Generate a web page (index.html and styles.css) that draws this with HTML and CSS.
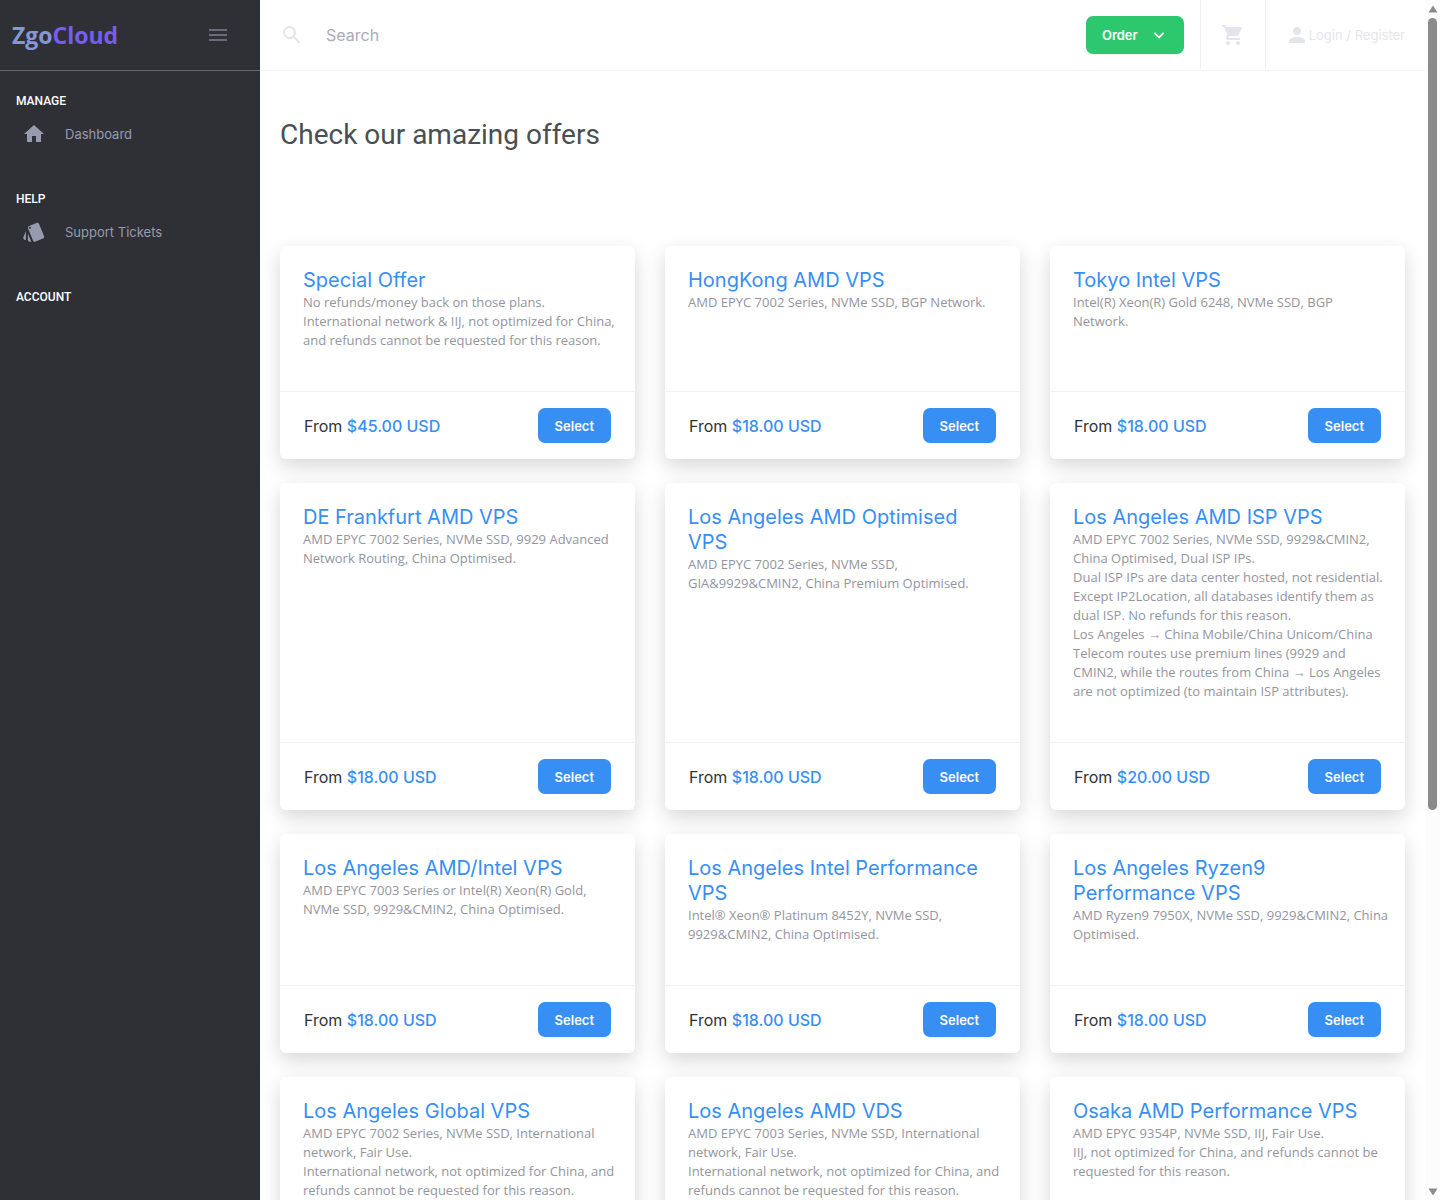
FILE: index.html
```html
<!DOCTYPE html>
<html lang="en">
<head>
  <meta charset="UTF-8" />
  <meta name="viewport" content="width=device-width, initial-scale=1.0" />
  <title>ZgoCloud</title>
  <link rel="stylesheet" href="styles.css">
</head>

<body>
  <!-- Sidebar -->
  <aside class="sidebar">
    <div class="sidebar-header">
      <a class="logo" href="#"><span class="logo-zgo">Zgo</span><span class="logo-cloud">Cloud</span></a>
      <button class="menu-toggle" aria-label="Toggle menu">
        <svg class="icon" viewBox="0 0 24 24"><path d="M3 18h18v-2H3v2zm0-5h18v-2H3v2zm0-7v2h18V6H3z"/></svg>
      </button>
    </div>
    <nav class="sidebar-nav">
      <div class="nav-group">
        <div class="nav-label">MANAGE</div>
        <a class="nav-link" href="#">
          <svg class="icon" viewBox="0 0 24 24"><path d="M10 20v-6h4v6h5v-8h3L12 3 2 12h3v8z"/></svg>
          Dashboard
        </a>
      </div>
      <div class="nav-group">
        <div class="nav-label">HELP</div>
        <a class="nav-link" href="#">
          <svg class="icon" viewBox="0 0 24 24"><path d="M2.53 19.65l1.34.56v-9.03l-2.43 5.86c-.41 1.02.08 2.19 1.09 2.61zm19.5-3.7L17.07 3.98c-.31-.75-1.04-1.21-1.81-1.23-.26 0-.53.04-.79.15L7.1 5.95c-.75.31-1.21 1.03-1.23 1.8-.01.27.04.54.15.8l4.96 11.97c.31.76 1.05 1.22 1.83 1.23.26 0 .52-.05.77-.15l7.36-3.05c1.02-.42 1.51-1.59 1.09-2.6zM7.88 8.75c-.55 0-1-.45-1-1s.45-1 1-1 1 .45 1 1-.45 1-1 1zm-2 11c0 1.1.9 2 2 2h1.45l-3.45-8.34v6.34z"/></svg>
          Support Tickets
        </a>
      </div>
      <div class="nav-group">
        <div class="nav-label">ACCOUNT</div>
      </div>
    </nav>
  </aside>

  <main class="main">
    <!-- Top bar -->
    <header class="top-bar">
      <label class="search">
        <svg class="icon" viewBox="0 0 24 24"><path d="M15.5 14h-.79l-.28-.27A6.471 6.471 0 0 0 16 9.5 6.5 6.5 0 1 0 9.5 16c1.61 0 3.09-.59 4.23-1.57l.27.28v.79l5 4.99L20.49 19l-4.99-5zm-6 0C7.01 14 5 11.99 5 9.5S7.01 5 9.5 5 14 7.01 14 9.5 11.99 14 9.5 14z"/></svg>
        <input class="search-input" type="text" placeholder="Search" aria-label="Search">
      </label>
      <button class="btn btn-order">
        Order
        <svg class="chevron" viewBox="0 0 24 24"><path d="M6.7 8.3L12 13.6l5.3-5.3L19 10l-7 7-7-7z"/></svg>
      </button>
      <a class="cart" href="#" aria-label="Cart">
        <svg class="icon" viewBox="0 0 24 24"><path d="M7 18c-1.1 0-1.99.9-1.99 2S5.9 22 7 22s2-.9 2-2-.9-2-2-2zM1 2v2h2l3.6 7.59-1.35 2.45c-.16.28-.25.61-.25.96 0 1.1.9 2 2 2h12v-2H7.42c-.14 0-.25-.11-.25-.25l.03-.12.9-1.63h7.45c.75 0 1.41-.41 1.75-1.03l3.58-6.49A1 1 0 0 0 20 4H5.21l-.94-2H1zm16 16c-1.1 0-1.99.9-1.99 2s.89 2 1.99 2 2-.9 2-2-.9-2-2-2z"/></svg>
      </a>
      <a class="login" href="#">
        <svg class="icon" viewBox="0 0 24 24"><path d="M12 12c2.21 0 4-1.79 4-4s-1.79-4-4-4-4 1.79-4 4 1.79 4 4 4zm0 2c-2.67 0-8 1.34-8 4v2h16v-2c0-2.66-5.33-4-8-4z"/></svg>
        Login / Register
      </a>
    </header>

    <div class="content">
      <h1>Check our amazing offers</h1>

      <div class="offers">
        <section class="card">
          <div class="card-body">
            <h2>Special Offer</h2>
            <p>No refunds/money back on those plans.<br>International network &amp; IIJ, not optimized for China, and refunds cannot be requested for this reason.</p>
          </div>
          <div class="card-footer">
            <div>From <span class="price">$45.00 USD</span></div>
            <button class="btn">Select</button>
          </div>
        </section>

        <section class="card">
          <div class="card-body">
            <h2>HongKong AMD VPS</h2>
            <p>AMD EPYC 7002 Series, NVMe SSD, BGP Network.</p>
          </div>
          <div class="card-footer">
            <div>From <span class="price">$18.00 USD</span></div>
            <button class="btn">Select</button>
          </div>
        </section>

        <section class="card">
          <div class="card-body">
            <h2>Tokyo Intel VPS</h2>
            <p>Intel(R) Xeon(R) Gold 6248, NVMe SSD, BGP Network.</p>
          </div>
          <div class="card-footer">
            <div>From <span class="price">$18.00 USD</span></div>
            <button class="btn">Select</button>
          </div>
        </section>

        <section class="card">
          <div class="card-body">
            <h2>DE Frankfurt AMD VPS</h2>
            <p>AMD EPYC 7002 Series, NVMe SSD, 9929 Advanced Network Routing, China Optimised.</p>
          </div>
          <div class="card-footer">
            <div>From <span class="price">$18.00 USD</span></div>
            <button class="btn">Select</button>
          </div>
        </section>

        <section class="card">
          <div class="card-body">
            <h2>Los Angeles AMD Optimised VPS</h2>
            <p>AMD EPYC 7002 Series, NVMe SSD, GIA&amp;9929&amp;CMIN2, China Premium Optimised.</p>
          </div>
          <div class="card-footer">
            <div>From <span class="price">$18.00 USD</span></div>
            <button class="btn">Select</button>
          </div>
        </section>

        <section class="card">
          <div class="card-body">
            <h2>Los Angeles AMD ISP VPS</h2>
            <p>AMD EPYC 7002 Series, NVMe SSD, 9929&amp;CMIN2, China Optimised, Dual ISP IPs.<br>Dual ISP IPs are data center hosted, not residential. Except IP2Location, all databases identify them as dual ISP. No refunds for this reason.<br>Los Angeles → China Mobile/China Unicom/China Telecom routes use premium lines (9929 and CMIN2, while the routes from China → Los Angeles are not optimized (to maintain ISP attributes).</p>
          </div>
          <div class="card-footer">
            <div>From <span class="price">$20.00 USD</span></div>
            <button class="btn">Select</button>
          </div>
        </section>

        <section class="card">
          <div class="card-body">
            <h2>Los Angeles AMD/Intel VPS</h2>
            <p>AMD EPYC 7003 Series or Intel(R) Xeon(R) Gold, NVMe SSD, 9929&amp;CMIN2, China Optimised.</p>
          </div>
          <div class="card-footer">
            <div>From <span class="price">$18.00 USD</span></div>
            <button class="btn">Select</button>
          </div>
        </section>

        <section class="card">
          <div class="card-body">
            <h2>Los Angeles Intel Performance VPS</h2>
            <p>Intel® Xeon® Platinum 8452Y, NVMe SSD, 9929&amp;CMIN2, China Optimised.</p>
          </div>
          <div class="card-footer">
            <div>From <span class="price">$18.00 USD</span></div>
            <button class="btn">Select</button>
          </div>
        </section>

        <section class="card">
          <div class="card-body">
            <h2>Los Angeles Ryzen9 Performance VPS</h2>
            <p>AMD Ryzen9 7950X, NVMe SSD, 9929&amp;CMIN2, China Optimised.</p>
          </div>
          <div class="card-footer">
            <div>From <span class="price">$18.00 USD</span></div>
            <button class="btn">Select</button>
          </div>
        </section>

        <section class="card">
          <div class="card-body">
            <h2>Los Angeles Global VPS</h2>
            <p>AMD EPYC 7002 Series, NVMe SSD, International network, Fair Use.<br>International network, not optimized for China, and refunds cannot be requested for this reason.</p>
          </div>
        </section>

        <section class="card">
          <div class="card-body">
            <h2>Los Angeles AMD VDS</h2>
            <p>AMD EPYC 7003 Series, NVMe SSD, International network, Fair Use.<br>International network, not optimized for China, and refunds cannot be requested for this reason.</p>
          </div>
        </section>

        <section class="card">
          <div class="card-body">
            <h2>Osaka AMD Performance VPS</h2>
            <p>AMD EPYC 9354P, NVMe SSD, IIJ, Fair Use.<br>IIJ, not optimized for China, and refunds cannot be requested for this reason.</p>
          </div>
        </section>
      </div>
    </div>
  </main>

  <!-- Scroll rail -->
  <div class="rail" aria-hidden="true">
    <svg class="rail-arrow" viewBox="0 0 10 8"><path d="M5 0.5L9.5 7.5H0.5z"/></svg>
    <div class="rail-track"><div class="rail-thumb"></div></div>
    <svg class="rail-arrow" viewBox="0 0 10 8"><path d="M5 7.5L0.5 0.5H9.5z"/></svg>
  </div>
</body>
</html>
```
FILE: styles.css
```css
* {
  box-sizing: border-box;
}

body {
  margin: 0;
  display: flex;
  height: 100vh;
  overflow: hidden;
  background-color: #fff;
  font-family: Inter, Roboto, sans-serif;
  font-size: 13px;
  color: #303236;
}

a {
  text-decoration: none;
}

.icon {
  width: 24px;
  height: 24px;
  flex: none;
  fill: currentColor;
}

/* Sidebar */
.sidebar {
  width: 260px;
  flex: none;
  background-color: #2f3036;
}

.sidebar-header {
  display: flex;
  align-items: center;
  justify-content: space-between;
  height: 71px;
  padding: 0 30px 0 12px;
  border-bottom: 1px solid #65666a;
}

.logo {
  font-family: "Open Sans", sans-serif;
  font-size: 23px;
  font-weight: 700;
}

.logo-zgo {
  color: #8497d6;
}

.logo-cloud {
  color: #785cf0;
}

.menu-toggle {
  display: flex;
  padding: 0;
  border: none;
  background: none;
  color: #696b7c;
  cursor: pointer;
}

.sidebar-nav {
  padding-top: 20px;
}

.nav-group {
  margin-bottom: 30px;
}

.nav-label {
  padding-left: 16px;
  font-family: Roboto, sans-serif;
  font-size: 12px;
  font-weight: 500;
  line-height: 20px;
  color: #fff;
}

.nav-link {
  display: flex;
  align-items: center;
  gap: 19px;
  height: 48px;
  padding: 0 0 2px 22px;
  color: #989bae;
}

/* Top bar */
.main {
  flex: 1;
  min-width: 0;
  overflow: auto;
  scrollbar-width: none;
}

.top-bar {
  display: flex;
  align-items: center;
  height: 71px;
  padding: 0 20px 1px;
  border-bottom: 1px solid #f3f3f5;
}

.search {
  display: flex;
  align-items: center;
  gap: 22px;
  flex: 1;
  color: #e4e5ec;
}

.search-input {
  flex: 1;
  padding: 0;
  border: none;
  outline: none;
  font-family: inherit;
  font-size: 16px;
  color: #303236;
}

.search-input::placeholder {
  color: #a9abb9;
}

.btn {
  height: 35px;
  padding: 0 16px;
  border: none;
  border-radius: 7px;
  background-color: #378ef3;
  color: #fff;
  font-family: inherit;
  font-size: 13px;
  font-weight: 600;
  cursor: pointer;
}

.btn-order {
  display: flex;
  align-items: center;
  gap: 12px;
  height: 38px;
  margin-right: 16px;
  background-color: #2dc76d;
}

.chevron {
  width: 18px;
  height: 18px;
  fill: currentColor;
}

.cart,
.login {
  display: flex;
  align-items: center;
  height: 100%;
  border-left: 1px solid #f0f0f3;
  color: #e4e5ec;
}

.cart {
  padding: 0 20px;
}

.login {
  padding-left: 19px;
}

/* Offers */
.content {
  padding: 44px 20px 24px;
}

h1 {
  margin: 0 0 91px;
  font-family: Roboto, sans-serif;
  font-size: 28px;
  font-weight: 400;
  line-height: 40px;
  color: #4a4f51;
}

.offers {
  display: grid;
  grid-template-columns: repeat(3, 1fr);
  gap: 24px 30px;
}

.card {
  display: flex;
  flex-direction: column;
  border-radius: 6px;
  background-color: #fff;
  box-shadow: 0 7px 20px rgba(0, 0, 0, 0.16);
}

.card-body {
  flex: 1;
  padding: 22px 16px 41px 23px;
}

.card h2 {
  margin: 0;
  padding-right: 8px;
  font-size: 20px;
  font-weight: 400;
  line-height: 25px;
  color: #378ef3;
}

.card p {
  margin: 0;
  font-family: "Open Sans", sans-serif;
  font-size: 13px;
  line-height: 19px;
  color: #93959e;
}

.card-footer {
  display: flex;
  align-items: center;
  justify-content: space-between;
  padding: 16px 24px;
  border-top: 1px solid #f1f1f3;
  font-size: 16px;
}

.card-footer .btn {
  padding: 0 17px;
}

.price {
  font-weight: 500;
  color: #378ef3;
}

/* Scroll rail */
.rail {
  display: flex;
  flex-direction: column;
  align-items: center;
  gap: 5px;
  width: 15px;
  padding: 5px 0 4px;
  background-color: #fcfcfc;
}

.rail-arrow {
  width: 10px;
  height: 8px;
  flex: none;
  fill: #8b8b8b;
}

.rail-track {
  flex: 1;
}

.rail-thumb {
  width: 9px;
  height: 68%;
  border-radius: 5px;
  background-color: #8b8b8b;
}
```
